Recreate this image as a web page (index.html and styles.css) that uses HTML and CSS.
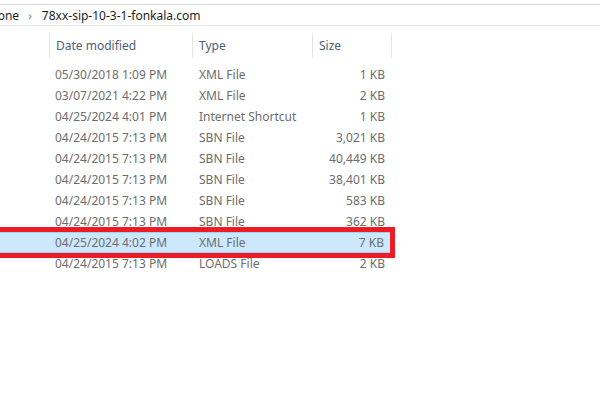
FILE: index.html
```html
<!DOCTYPE html>
<html lang="en">
<head>
    <meta charset="UTF-8">
    <title>78xx-sip-10-3-1-fonkala.com</title>
    <link rel="stylesheet" href="styles.css">
</head>
<body>
    <div class="address">
        <span class="crumb crumb-prev">Phone</span>
        <span class="chevron">&#8250;</span>
        <span class="crumb">78xx-sip-10-3-1-fonkala.com</span>
    </div>

    <div class="list">
        <div class="header">
            <div class="col col-name"></div>
            <div class="col col-date">Date modified</div>
            <div class="col col-type">Type</div>
            <div class="col col-size">Size</div>
        </div>

        <div class="row">
            <div class="col col-name"></div>
            <div class="col col-date">05/30/2018 1:09 PM</div>
            <div class="col col-type">XML File</div>
            <div class="col col-size">1 KB</div>
        </div>
        <div class="row">
            <div class="col col-name"></div>
            <div class="col col-date">03/07/2021 4:22 PM</div>
            <div class="col col-type">XML File</div>
            <div class="col col-size">2 KB</div>
        </div>
        <div class="row">
            <div class="col col-name"></div>
            <div class="col col-date">04/25/2024 4:01 PM</div>
            <div class="col col-type">Internet Shortcut</div>
            <div class="col col-size">1 KB</div>
        </div>
        <div class="row">
            <div class="col col-name"></div>
            <div class="col col-date">04/24/2015 7:13 PM</div>
            <div class="col col-type">SBN File</div>
            <div class="col col-size">3,021 KB</div>
        </div>
        <div class="row">
            <div class="col col-name"></div>
            <div class="col col-date">04/24/2015 7:13 PM</div>
            <div class="col col-type">SBN File</div>
            <div class="col col-size">40,449 KB</div>
        </div>
        <div class="row">
            <div class="col col-name"></div>
            <div class="col col-date">04/24/2015 7:13 PM</div>
            <div class="col col-type">SBN File</div>
            <div class="col col-size">38,401 KB</div>
        </div>
        <div class="row">
            <div class="col col-name"></div>
            <div class="col col-date">04/24/2015 7:13 PM</div>
            <div class="col col-type">SBN File</div>
            <div class="col col-size">583 KB</div>
        </div>
        <div class="row">
            <div class="col col-name"></div>
            <div class="col col-date">04/24/2015 7:13 PM</div>
            <div class="col col-type">SBN File</div>
            <div class="col col-size">362 KB</div>
        </div>
        <div class="row selected">
            <div class="col col-name"></div>
            <div class="col col-date">04/25/2024 4:02 PM</div>
            <div class="col col-type">XML File</div>
            <div class="col col-size">7 KB</div>
        </div>
        <div class="row">
            <div class="col col-name"></div>
            <div class="col col-date">04/24/2015 7:13 PM</div>
            <div class="col col-type">LOADS File</div>
            <div class="col col-size">2 KB</div>
        </div>
    </div>
</body>
</html>
```

FILE: styles.css
```css
:root {
    --line: #e5e5e5;
    --text: #6d6d6d;
    --header-text: #4c607a;
    --select-bg: #cce8ff;
    --select-border: #99d1ff;
    --mark: #ed1c24;
}

* {
    margin: 0;
    padding: 0;
    box-sizing: border-box;
}

body {
    background-color: #ffffff;
    font-family: "Noto Sans", "Open Sans", sans-serif;
    font-size: 12px;
    overflow: hidden;
}

.address {
    display: flex;
    align-items: center;
    margin-top: 4px;
    height: 22px;
    border-top: 1px solid #d9d9d9;
    border-bottom: 1px solid var(--line);
    color: #1e1e1e;
    white-space: nowrap;
}

.crumb-prev {
    margin-left: -17px;
}

.chevron {
    color: #8a8a8a;
    margin: 0 10px 0 9px;
}

.list {
    margin-top: 7px;
}

.header,
.row {
    display: flex;
    align-items: center;
    white-space: nowrap;
}

.header {
    height: 25px;
    margin-bottom: 6px;
    color: var(--header-text);
}

.row {
    height: 21px;
    color: var(--text);
}

.col {
    flex-shrink: 0;
    height: 100%;
    display: flex;
    align-items: center;
    padding: 0 7px 0 6px;
}

.col-name {
    width: 49px;
    padding: 0;
}

.col-date {
    width: 144px;
}

.col-type {
    width: 120px;
}

.col-size {
    width: 79px;
    justify-content: flex-end;
}

.header .col {
    border-right: 1px solid var(--line);
}

.header .col-date {
    border-left: 1px solid var(--line);
    padding-left: 6px;
}

.header .col-name {
    border-right: none;
}

.header .col-size {
    justify-content: flex-start;
}

.row.selected {
    position: relative;
    width: 391px;
    background-color: var(--select-bg);
    border: 1px solid var(--select-border);
    border-left: none;
}

.row.selected .col-size {
    width: 78px;
}

/* red annotation box drawn over the selected row */
.row.selected::after {
    content: "";
    position: absolute;
    left: -10px;
    top: -6px;
    right: -5px;
    bottom: -6px;
    border: 5px solid var(--mark);
}
```
